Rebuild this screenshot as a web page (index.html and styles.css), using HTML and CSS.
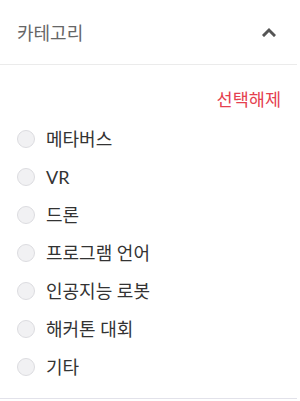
FILE: index.html
```html
<!DOCTYPE html>
<html lang="ko">
<head>
<meta charset="utf-8">
<link rel="stylesheet" href="styles.css">
</head>
<body>
<div class="panel">
  <div class="panel-header">
    <span class="panel-title">카테고리</span>
    <svg class="chevron" width="14" height="10" viewBox="0 0 14 10"><path d="M2 8 L7 3 L12 8" fill="none" stroke="#555" stroke-width="3" stroke-linecap="square"/></svg>
  </div>
  <div class="panel-body">
    <div class="reset-row"><span class="reset">선택해제</span></div>
    <ul class="options">
      <li class="option"><span class="radio"></span><span class="label">메타버스</span></li>
      <li class="option"><span class="radio"></span><span class="label">VR</span></li>
      <li class="option"><span class="radio"></span><span class="label">드론</span></li>
      <li class="option"><span class="radio"></span><span class="label">프로그램 언어</span></li>
      <li class="option"><span class="radio"></span><span class="label">인공지능 로봇</span></li>
      <li class="option"><span class="radio"></span><span class="label">해커톤 대회</span></li>
      <li class="option"><span class="radio"></span><span class="label">기타</span></li>
    </ul>
  </div>
</div>
</body>
</html>
```
FILE: styles.css
```css
html, body {
  margin: 0;
  padding: 0;
  background: #fff;
}
body {
  font-family: "Lato", "Noto Sans CJK KR", sans-serif;
}
.panel {
  width: 297px;
  border-bottom: 1px solid #e2e2ea;
}
.panel-header {
  height: 65px;
  box-sizing: border-box;
  display: flex;
  align-items: center;
  justify-content: space-between;
  padding: 0 21px 0 17px;
  border-bottom: 1px solid #ebebeb;
}
.panel-title {
  font-size: 18px;
  color: #666;
  line-height: 20px;
  margin-top: 1px;
}
.chevron {
  display: block;
}
.panel-body {
  padding: 25px 16px 12px 17px;
}
.reset-row {
  display: flex;
  justify-content: flex-end;
  height: 20px;
  margin-bottom: 10px;
}
.reset {
  font-size: 17.5px;
  line-height: 20px;
  color: #e5404f;
}
.options {
  list-style: none;
  margin: 0;
  padding: 0;
}
.option {
  height: 38px;
  display: flex;
  align-items: center;
  gap: 11px;
}
.radio {
  width: 18px;
  height: 18px;
  box-sizing: border-box;
  border-radius: 50%;
  border: 1px solid #dcdce0;
  background: #f1f1f3;
  flex: none;
}
.label {
  font-size: 18px;
  color: #333;
  line-height: 20px;
}
```
